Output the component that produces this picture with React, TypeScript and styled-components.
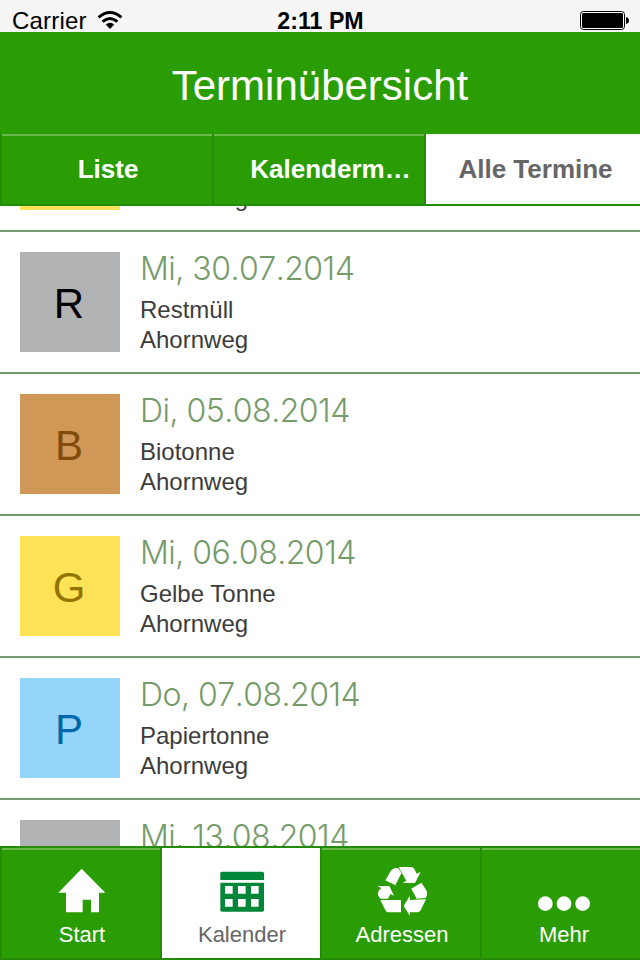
import React from "react";
import styled, { createGlobalStyle } from "styled-components";

const GREEN = "#2a9d05";
const EDGE = "#238b05";
const SHINE = "#69b94f";
const SAGE = "#769b6b";

const GlobalStyle = createGlobalStyle`
  * { box-sizing: border-box; }
  body {
    margin: 0;
    background: #fff;
    font-family: "Liberation Sans", Arial, sans-serif;
  }
`;

const Screen = styled.div`
  width: 640px;
  height: 960px;
  display: flex;
  flex-direction: column;
  overflow: hidden;
  background: #fff;
`;

const StatusBar = styled.div`
  flex: none;
  height: 32px;
  display: grid;
  grid-template-columns: 1fr auto 1fr;
  padding: 0 11px 0 12px;
  background: #f5f5f5;
  color: #000;
  line-height: 28px;
`;

const Carrier = styled.div`
  display: flex;
  gap: 10px;
  padding-top: 7px;
  font-size: 24px;
  letter-spacing: 0.2px;
`;

const WifiSvg = styled.svg`
  margin-top: 3px;
`;

const Clock = styled.div`
  padding-top: 7px;
  font-size: 23.2px;
  font-weight: 700;
`;

const Battery = styled.div`
  display: flex;
  justify-content: flex-end;
  padding-top: 11px;
`;

const Header = styled.header`
  flex: none;
  height: 102px;
  display: flex;
  align-items: center;
  justify-content: center;
  padding-top: 6px;
  background: ${GREEN};
  color: #fff;
  font-size: 42px;
`;

const Segments = styled.nav`
  flex: none;
  height: 72px;
  display: grid;
  grid-template-columns: 212px 212px 216px;
  border-bottom: 2px solid ${EDGE};
`;

const Segment = styled.div<{ $active?: boolean; $inset?: number }>`
  display: flex;
  align-items: center;
  justify-content: center;
  padding-left: ${(p) => p.$inset ?? 2}px;
  border-left: 2px solid ${EDGE};
  box-shadow: ${(p) => (p.$active ? "none" : `inset 0 2px ${SHINE}`)};
  background: ${(p) => (p.$active ? "#fff" : GREEN)};
  color: ${(p) => (p.$active ? "#666" : "#fff")};
  font-size: 26px;
  font-weight: 700;
  white-space: nowrap;
`;

const Viewport = styled.main`
  flex: 1;
  min-height: 0;
  overflow: hidden;
`;

const List = styled.ul`
  margin: -116px 0 0;
  padding: 0;
  list-style: none;
`;

const Row = styled.li`
  height: 142px;
  display: flex;
  gap: 20px;
  padding: 20px;
  border-bottom: 2px solid ${SAGE};
`;

const Badge = styled.div<{ $bg: string; $fg: string }>`
  flex: none;
  width: 100px;
  height: 100px;
  display: flex;
  align-items: center;
  justify-content: center;
  padding: 3px 2px 0 0;
  background: ${(p) => p.$bg};
  color: ${(p) => p.$fg};
  font-size: 42px;
`;

const Details = styled.div`
  color: #3c3c3c;
  font-size: 24px;
  line-height: 30px;
  white-space: nowrap;
`;

const DateLine = styled.div`
  height: 43px;
  color: ${SAGE};
  font-family: Inter, "Liberation Sans", sans-serif;
  font-size: 32px;
  font-weight: 300;
  font-kerning: none;
  letter-spacing: -0.5px;
  line-height: 34px;
`;

const TabBar = styled.nav`
  flex: none;
  height: 114px;
  display: grid;
  grid-template-columns: repeat(4, 160px);
  border-top: 2px solid ${EDGE};
  border-bottom: 2px solid ${EDGE};
`;

const Tab = styled.div<{ $active?: boolean; $inset?: number }>`
  display: flex;
  flex-direction: column;
  align-items: center;
  padding: 18px 0 0 ${(p) => p.$inset ?? 2}px;
  border-left: 2px solid ${EDGE};
  box-shadow: ${(p) => (p.$active ? "none" : `inset 0 2px ${SHINE}`)};
  background: ${(p) => (p.$active ? "#fff" : GREEN)};
  color: ${(p) => (p.$active ? "#666" : "#fff")};
  font-size: 22px;
  line-height: 26px;
`;

const TabIcon = styled.svg`
  display: block;
  width: 54px;
  height: 52px;
  margin-bottom: 4px;
`;

type Kind = { letter: string; name: string; bg: string; fg: string };

const REST: Kind = { letter: "R", name: "Restmüll", bg: "#b1b2b4", fg: "#000" };
const BIO: Kind = { letter: "B", name: "Biotonne", bg: "#cf9857", fg: "#824b0b" };
const GELB: Kind = { letter: "G", name: "Gelbe Tonne", bg: "#ffe357", fg: "#947400" };
const PAPIER: Kind = { letter: "P", name: "Papiertonne", bg: "#94d5f9", fg: "#0067a8" };

const dates: { date: string; kind: Kind }[] = [
  { date: "Mi, 23.07.2014", kind: GELB },
  { date: "Mi, 30.07.2014", kind: REST },
  { date: "Di, 05.08.2014", kind: BIO },
  { date: "Mi, 06.08.2014", kind: GELB },
  { date: "Do, 07.08.2014", kind: PAPIER },
  { date: "Mi, 13.08.2014", kind: REST },
];

const WifiIcon = () => (
  <WifiSvg width="26" height="20" viewBox="0 0 26 20">
    <g fill="none" stroke="#000" strokeWidth="3">
      <path d="M1.6 7.4Q13 -2.4 24.4 7.4" />
      <path d="M5.6 11.6Q13 5.4 20.4 11.6" />
    </g>
    <path d="M8.8 14.6Q13 11 17.2 14.6L13 19Z" fill="#000" />
  </WifiSvg>
);

const BatteryIcon = () => (
  <svg width="49" height="19" viewBox="0 0 49 19">
    <rect x="0.5" y="0.5" width="44" height="18" rx="3" fill="#fff" stroke="#000" />
    <rect x="2" y="2" width="41" height="15" rx="1.5" fill="#000" />
    <path d="M46 6Q49 6.6 49 9.5T46 13Z" fill="#000" />
  </svg>
);

const HomeIcon = () => (
  <TabIcon viewBox="0 0 162 156" fill="#fff">
    <path d="M80 8L151 80H132V139H108V101H83V139H33V80H10Z" />
  </TabIcon>
);

const CalendarIcon = () => (
  <TabIcon viewBox="0 0 162 156" fill="#008638">
    <path d="M16 42V22Q16 17 21 17H142Q147 17 147 22V42Z" />
    <path
      fillRule="evenodd"
      d="M16 50H147V132Q147 137 142 137H21Q16 137 16 132ZM30 60V83H53V60ZM69 60V83H92V60ZM108 60V83H131V60ZM30 99V122H53V99ZM69 99V122H92V99ZM108 99V122H131V99Z"
    />
  </TabIcon>
);

const RecycleIcon = () => (
  <TabIcon viewBox="165 78 162 156" fill="#fff">
    <path d="M196 121L212 94Q219 84 229 84Q238 84 244 100L226 136Z" />
    <path d="M236 81H272Q280 81 283 87L290 101L302 96L285 129H248L259 122Z" />
    <path d="M274 146L304 128L318 149Q325 162 317 174L290 176Z" />
    <path d="M318 178L302 211Q299 217 292 217H270V228L251 198L269 168L270 180Z" />
    <path d="M181 180H243V217H204Q199 217 196 210Z" />
    <path d="M173 138H208L222 167L211 162L204 176H182Q172 168 174 157Q176 149 184 145Z" />
  </TabIcon>
);

const MoreIcon = () => (
  <TabIcon viewBox="0 0 162 156" fill="#fff">
    <circle cx="25" cy="113" r="22" />
    <circle cx="81" cy="113" r="22" />
    <circle cx="137" cy="113" r="22" />
  </TabIcon>
);

export default function App() {
  return (
    <>
      <GlobalStyle />
      <Screen>
        <StatusBar>
          <Carrier>
            Carrier
            <WifiIcon />
          </Carrier>
          <Clock>2:11 PM</Clock>
          <Battery>
            <BatteryIcon />
          </Battery>
        </StatusBar>
        <Header>Terminübersicht</Header>
        <Segments>
          <Segment>Liste</Segment>
          <Segment $inset={23}>Kalenderm…</Segment>
          <Segment $active $inset={5}>
            Alle Termine
          </Segment>
        </Segments>
        <Viewport>
          <List>
            {dates.map(({ date, kind }) => (
              <Row key={date}>
                <Badge $bg={kind.bg} $fg={kind.fg}>
                  {kind.letter}
                </Badge>
                <Details>
                  <DateLine>{date}</DateLine>
                  <div>{kind.name}</div>
                  <div>Ahornweg</div>
                </Details>
              </Row>
            ))}
          </List>
        </Viewport>
        <TabBar>
          <Tab>
            <HomeIcon />
            Start
          </Tab>
          <Tab $active>
            <CalendarIcon />
            Kalender
          </Tab>
          <Tab>
            <RecycleIcon />
            Adressen
          </Tab>
          <Tab $inset={6}>
            <MoreIcon />
            Mehr
          </Tab>
        </TabBar>
      </Screen>
    </>
  );
}
